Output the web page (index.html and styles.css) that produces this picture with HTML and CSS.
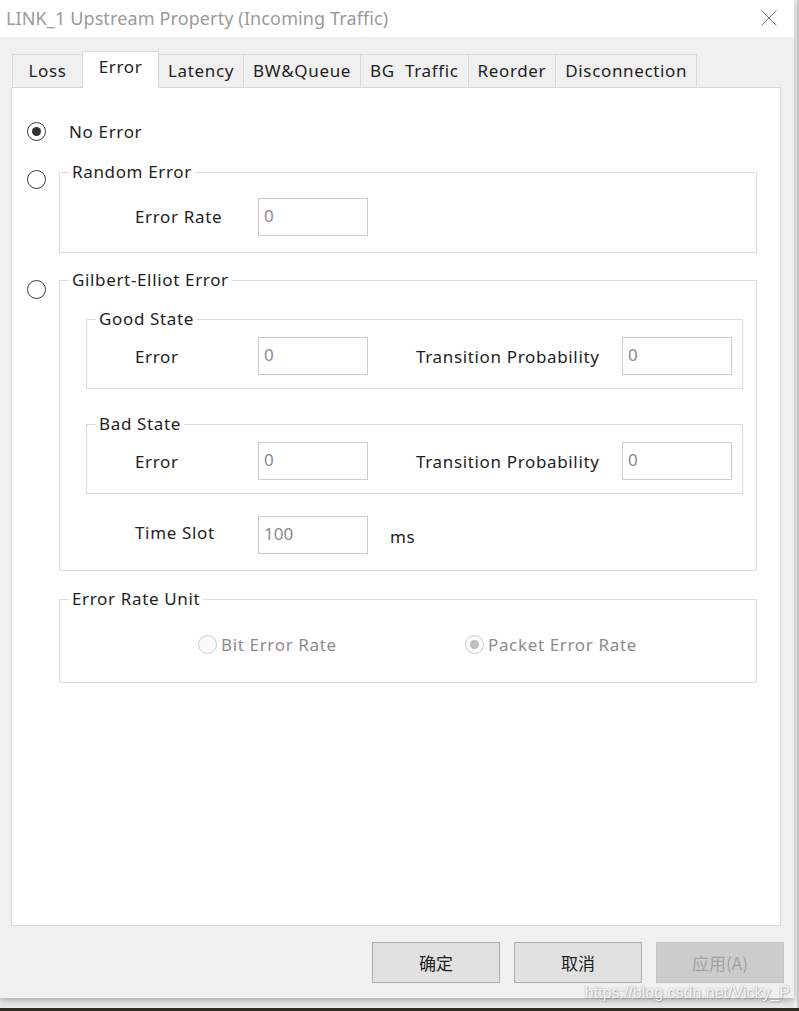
FILE: index.html
```html
<!DOCTYPE html>
<html lang="en">
<head>
    <meta charset="UTF-8">
    <meta name="viewport" content="width=device-width, initial-scale=1.0">
    <title>LINK_1 Upstream Property</title>
    <link rel="stylesheet" href="styles.css">
</head>
<body>
    <div class="desktop">
        <div class="screen">
            <div class="dialog">
                <div class="titlebar">
                    <span class="title">LINK_1 Upstream Property (Incoming Traffic)</span>
                    <svg class="close" width="16" height="16" viewBox="0 0 16 16">
                        <path d="M0.5 0.5 L15.5 15.5 M15.5 0.5 L0.5 15.5" stroke="#707070" stroke-width="1" fill="none"/>
                    </svg>
                </div>

                <div class="tabs">
                    <div class="tab">Loss</div>
                    <div class="tab active">Error</div>
                    <div class="tab">Latency</div>
                    <div class="tab">BW&amp;Queue</div>
                    <div class="tab">BG&nbsp; Traffic</div>
                    <div class="tab">Reorder</div>
                    <div class="tab">Disconnection</div>
                </div>

                <div class="panel">
                    <div class="option first">
                        <span class="radio checked"></span>
                        <span class="option-label">No Error</span>
                    </div>

                    <div class="option random">
                        <span class="radio"></span>
                        <fieldset class="group">
                            <legend>Random Error</legend>
                            <div class="field-row">
                                <label>Error Rate</label>
                                <input class="edit" value="0" readonly>
                            </div>
                        </fieldset>
                    </div>

                    <div class="option gilbert">
                        <span class="radio"></span>
                        <fieldset class="group">
                            <legend>Gilbert-Elliot Error</legend>

                            <fieldset class="state">
                                <legend>Good State</legend>
                                <div class="state-row">
                                    <label>Error</label>
                                    <input class="edit" value="0" readonly>
                                    <label>Transition Probability</label>
                                    <input class="edit" value="0" readonly>
                                </div>
                            </fieldset>

                            <fieldset class="state bad">
                                <legend>Bad State</legend>
                                <div class="state-row">
                                    <label>Error</label>
                                    <input class="edit" value="0" readonly>
                                    <label>Transition Probability</label>
                                    <input class="edit" value="0" readonly>
                                </div>
                            </fieldset>

                            <div class="field-row time">
                                <label>Time Slot</label>
                                <input class="edit" value="100" readonly>
                                <span class="unit-ms">ms</span>
                            </div>
                        </fieldset>
                    </div>

                    <div class="option unit">
                        <fieldset class="group">
                            <legend>Error Rate Unit</legend>
                            <div class="unit-row">
                                <div class="choice">
                                    <span class="radio disabled"></span>
                                    <span>Bit Error Rate</span>
                                </div>
                                <div class="choice">
                                    <span class="radio disabled checked"></span>
                                    <span>Packet Error Rate</span>
                                </div>
                            </div>
                        </fieldset>
                    </div>
                </div>

                <div class="buttons">
                    <button class="btn">确定</button>
                    <button class="btn">取消</button>
                    <button class="btn" disabled>应用(A)</button>
                </div>
            </div>
            <div class="edge"></div>
        </div>
        <div class="taskbar"></div>
        <div class="watermark">https://blog.csdn.net/Vicky_P</div>
    </div>
</body>
</html>
```

FILE: styles.css
```css
body {
    margin: 0;
    background-color: #e9e9e9;
    font-family: "Noto Sans", "Noto Sans CJK SC", sans-serif;
    color: #1e1e1e;
}

.desktop {
    position: relative;
    display: flex;
    flex-direction: column;
    width: 799px;
    height: 1011px;
    overflow: hidden;
}

.screen {
    display: flex;
    flex: 1;
}

.dialog {
    display: flex;
    flex-direction: column;
    width: 794px;
    height: 998px;
    background-color: #f0f0f0;
    box-shadow: 0 2px 7px rgba(0, 0, 0, 0.3);
    position: relative;
    z-index: 1;
}

.edge {
    flex: 1;
    background-color: #ededed;
    border-left: 2px solid #f4f4f4;
    box-shadow: inset -2px 0 0 #cfcfcf;
}

.taskbar {
    height: 3px;
    background-color: #2c2c24;
}

/* title bar */
.titlebar {
    display: flex;
    align-items: center;
    justify-content: space-between;
    height: 37px;
    padding: 0 17px 0 6px;
    background-color: #fff;
}

.title {
    font-size: 18px;
    letter-spacing: 0.12px;
    color: #9a9a9a;
    margin-top: -2px;
}

.close {
    margin-top: -1px;
}

/* tabs */
.tabs {
    display: flex;
    align-items: flex-end;
    height: 37px;
    margin: 14px 0 -1px 12px;
    position: relative;
    z-index: 2;
}

.tab {
    box-sizing: border-box;
    height: 34px;
    min-width: 71px;
    padding: 0 9px;
    margin-left: -1px;
    border: 1px solid #d9d9d9;
    background-color: #f0f0f0;
    font-size: 17px;
    letter-spacing: 0.65px;
    line-height: 31px;
    text-align: center;
    color: #1e1e1e;
}

.tab:first-child {
    margin-left: 0;
}

.tab.active {
    height: 37px;
    min-width: 77px;
    line-height: 30px;
    border-bottom: none;
    background-color: #fff;
}

/* page */
.panel {
    box-sizing: border-box;
    width: 770px;
    height: 839px;
    margin-left: 11px;
    padding: 33px 0 0 15px;
    border: 1px solid #d9d9d9;
    background-color: #fff;
    letter-spacing: 0.65px;
}

.option {
    display: flex;
    align-items: flex-start;
}

.option.first {
    align-items: center;
    height: 20px;
}

.option-label {
    margin-left: 10px;
    font-size: 17px;
}

.option.random {
    margin-top: 21px;
}

.option.random .radio {
    margin-top: 8px;
}

.option.gilbert {
    margin-top: 17px;
}

.option.gilbert .radio {
    margin-top: 10px;
}

.option.unit {
    margin-top: 18px;
    padding-left: 32px;
}

.radio {
    display: flex;
    align-items: center;
    justify-content: center;
    flex: none;
    box-sizing: border-box;
    width: 19px;
    height: 19px;
    border: 1px solid #3a3a3a;
    border-radius: 50%;
    background-color: #fff;
}

.option > .radio {
    margin-right: 13px;
}

.radio.checked::after {
    content: "";
    width: 9px;
    height: 9px;
    border-radius: 50%;
    background-color: #333;
}

.radio.disabled {
    border-color: #cccccc;
    background-color: #fafafa;
}

.radio.disabled.checked::after {
    background-color: #bdbdbd;
}

/* group boxes */
fieldset {
    box-sizing: border-box;
    margin: 0;
    padding: 0;
    min-width: 0;
    border: 1px solid #dcdcdc;
}

legend {
    margin-left: 9px;
    padding: 0 3px;
    font-size: 17px;
    line-height: 20px;
    color: #1e1e1e;
}

.group {
    width: 698px;
}

.state {
    margin: 19px 13px 0 26px;
}

.state.bad {
    margin-top: 25px;
}

label,
.unit-ms {
    font-size: 17px;
    color: #1e1e1e;
}

.field-row {
    display: grid;
    grid-template-columns: 123px 110px auto;
    align-items: center;
    padding: 16px 0 16px 75px;
}

.field-row label {
    margin-top: -2px;
}

.field-row.time {
    padding: 22px 0 16px 75px;
}

.field-row.time label {
    margin-top: -5px;
}

.unit-ms {
    margin-left: 22px;
    padding-top: 2px;
}

.state-row {
    display: grid;
    grid-template-columns: 123px 158px 206px 110px;
    align-items: center;
    padding: 8px 0 13px 48px;
}

.edit {
    box-sizing: border-box;
    width: 110px;
    height: 38px;
    padding: 0 5px 4px;
    border: 1px solid #cdcdcd;
    background-color: #fff;
    font-family: "Noto Sans", sans-serif;
    font-size: 17px;
    color: #8a8a8a;
    outline: none;
}

.unit-row {
    display: grid;
    grid-template-columns: 267px auto;
    align-items: center;
    height: 20px;
    padding: 24px 0 29px 138px;
}

.choice {
    display: flex;
    align-items: center;
    gap: 4px;
    font-size: 17px;
    color: #8c8c8c;
}

/* buttons */
.buttons {
    display: flex;
    justify-content: flex-end;
    gap: 14px;
    padding: 16px 10px 0 0;
}

.btn {
    box-sizing: border-box;
    width: 128px;
    height: 41px;
    border: 1px solid #adadad;
    background-color: #e1e1e1;
    font-family: "Noto Sans CJK SC", sans-serif;
    font-size: 17px;
    color: #1e1e1e;
}

.btn:disabled {
    border-color: #c4c4c4;
    background-color: #cccccc;
    color: #a3a3a3;
}

.watermark {
    position: absolute;
    right: 9px;
    bottom: 9px;
    z-index: 3;
    font-family: "Liberation Sans", Arial, sans-serif;
    font-size: 16px;
    color: rgba(255, 255, 255, 0.9);
    text-shadow: 0 0 2px rgba(0, 0, 0, 0.35), 1px 1px 1px rgba(0, 0, 0, 0.15);
}
```
